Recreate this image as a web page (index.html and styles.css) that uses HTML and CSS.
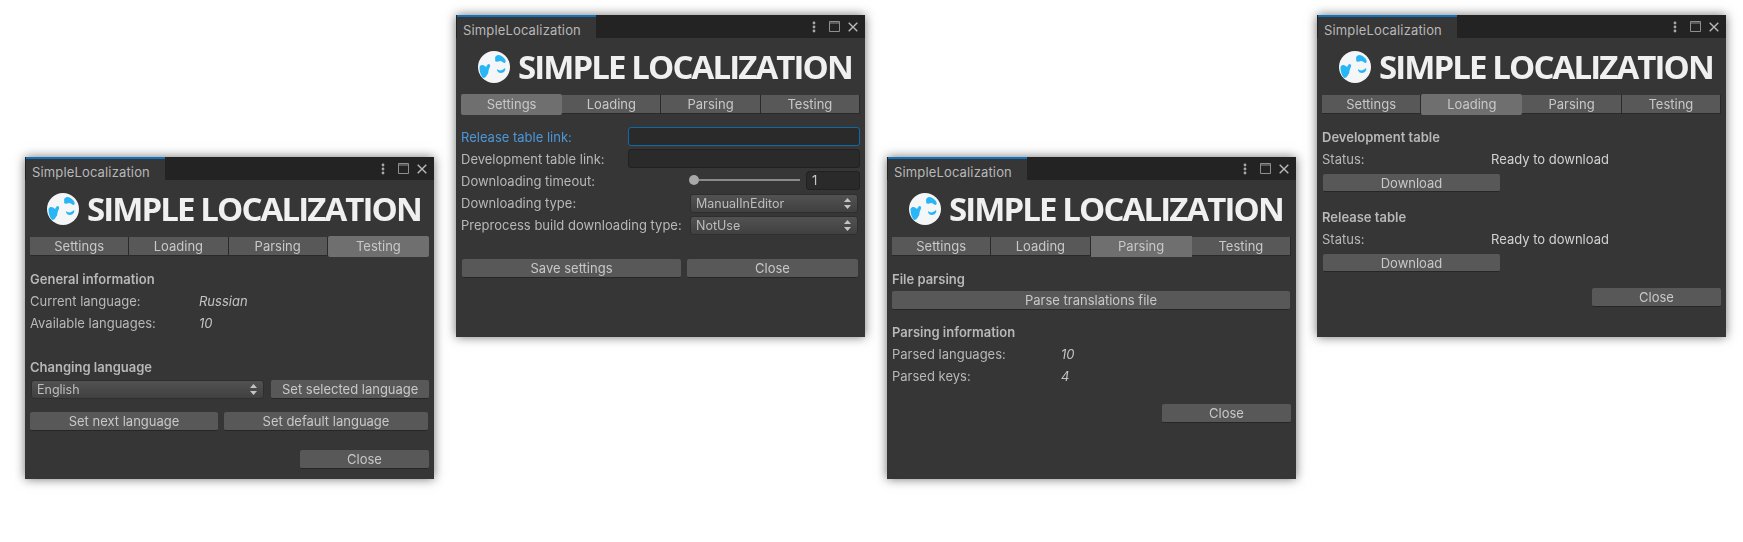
FILE: index.html
```html
<!DOCTYPE html>
<html>
<head>
    <title>SimpleLocalization</title>
    <link rel="stylesheet" href="styles.css">
</head>
<body>
    <svg width="0" height="0" class="defs">
        <symbol id="globe" viewBox="0 0 32 32">
            <circle cx="16" cy="16" r="16" fill="#f4f6f7"/>
            <path fill="#29b6f6" d="M18 5 C20 3 23 4 26 7 C28 9 28 11 27 12 C25 12 24 10 22 10 C20 11 18 11 17 10 C18 8 16 7 18 5 Z"/>
            <path fill="#29b6f6" d="M1.5 16 C3 13 6 14 8 16 C9 15 9 13 11 13 C13 14 12 16 11 18 C10 20 11 22 9 24 C8 26 7 27 5 27 C2 23 1.5 20 1.5 16 Z"/>
            <path fill="#29b6f6" d="M19 18 C21 20 24 20 27 17 C28 19 26 22 23 22 C21 22 19 21 19 18 Z"/>
        </symbol>
        <symbol id="updown" viewBox="0 0 7 11">
            <path fill="#c4c4c4" d="M3.5 0 L7 4 H0 Z M0 7 H7 L3.5 11 Z"/>
        </symbol>
    </svg>

    <!-- Testing tab -->
    <div class="window win-testing">
        <div class="titlebar">
            <div class="tab-title">SimpleLocalization</div>
            <div class="win-icons">
                <svg class="dots" width="4" height="12" viewBox="0 0 4 12"><circle cx="2" cy="2" r="1.4"/><circle cx="2" cy="6" r="1.4"/><circle cx="2" cy="10" r="1.4"/></svg>
                <svg width="11" height="11" viewBox="0 0 11 11"><path d="M.5 .5 H10.5 V10.5 H.5 Z M.5 2 H10.5" class="outline"/></svg>
                <svg width="10" height="10" viewBox="0 0 10 10"><path d="M.7 .7 L9.3 9.3 M9.3 .7 L.7 9.3" class="outline strong"/></svg>
            </div>
        </div>
        <div class="logo">
            <svg class="globe"><use href="#globe"/></svg>
            <span class="logo-text">SIMPLE LOCALIZATION</span>
        </div>
        <div class="tabs">
            <button class="tab">Settings</button>
            <button class="tab">Loading</button>
            <button class="tab">Parsing</button>
            <button class="tab active rounded">Testing</button>
        </div>
        <div class="pane">
            <div class="row heading">General information</div>
            <div class="row"><span class="key">Current language:</span><em>Russian</em></div>
            <div class="row"><span class="key">Available languages:</span><em>10</em></div>
            <div class="row heading mt-changing">Changing language</div>
            <div class="btn-row mt-select">
                <div class="dropdown lang-select">English <svg class="arrows"><use href="#updown"/></svg></div>
                <button class="btn set-selected">Set selected language</button>
            </div>
            <div class="btn-row mt-next">
                <button class="btn set-next">Set next language</button>
                <button class="btn set-default">Set default language</button>
            </div>
            <div class="close-row mt-close-testing"><button class="btn close">Close</button></div>
        </div>
    </div>

    <!-- Settings tab -->
    <div class="window win-settings">
        <div class="titlebar">
            <div class="tab-title">SimpleLocalization</div>
            <div class="win-icons">
                <svg class="dots" width="4" height="12" viewBox="0 0 4 12"><circle cx="2" cy="2" r="1.4"/><circle cx="2" cy="6" r="1.4"/><circle cx="2" cy="10" r="1.4"/></svg>
                <svg width="11" height="11" viewBox="0 0 11 11"><path d="M.5 .5 H10.5 V10.5 H.5 Z M.5 2 H10.5" class="outline"/></svg>
                <svg width="10" height="10" viewBox="0 0 10 10"><path d="M.7 .7 L9.3 9.3 M9.3 .7 L.7 9.3" class="outline strong"/></svg>
            </div>
        </div>
        <div class="logo">
            <svg class="globe"><use href="#globe"/></svg>
            <span class="logo-text">SIMPLE LOCALIZATION</span>
        </div>
        <div class="tabs">
            <button class="tab active rounded">Settings</button>
            <button class="tab">Loading</button>
            <button class="tab">Parsing</button>
            <button class="tab">Testing</button>
        </div>
        <div class="pane">
            <div class="row focused">Release table link:<input class="field link-field focus" type="text"></div>
            <div class="row">Development table link:<input class="field link-field" type="text"></div>
            <div class="row">Downloading timeout:
                <div class="slider"><span class="knob"></span><span class="track"></span></div>
                <input class="field number-field" type="text" value="1">
            </div>
            <div class="row">Downloading type:<div class="dropdown type-select">ManualInEditor <svg class="arrows"><use href="#updown"/></svg></div></div>
            <div class="row">Preprocess build downloading type:<div class="dropdown type-select">NotUse <svg class="arrows"><use href="#updown"/></svg></div></div>
            <div class="btn-row mt-save">
                <button class="btn save">Save settings</button>
                <button class="btn close-settings">Close</button>
            </div>
        </div>
    </div>

    <!-- Parsing tab -->
    <div class="window win-parsing">
        <div class="titlebar">
            <div class="tab-title">SimpleLocalization</div>
            <div class="win-icons">
                <svg class="dots" width="4" height="12" viewBox="0 0 4 12"><circle cx="2" cy="2" r="1.4"/><circle cx="2" cy="6" r="1.4"/><circle cx="2" cy="10" r="1.4"/></svg>
                <svg width="11" height="11" viewBox="0 0 11 11"><path d="M.5 .5 H10.5 V10.5 H.5 Z M.5 2 H10.5" class="outline"/></svg>
                <svg width="10" height="10" viewBox="0 0 10 10"><path d="M.7 .7 L9.3 9.3 M9.3 .7 L.7 9.3" class="outline strong"/></svg>
            </div>
        </div>
        <div class="logo">
            <svg class="globe"><use href="#globe"/></svg>
            <span class="logo-text">SIMPLE LOCALIZATION</span>
        </div>
        <div class="tabs">
            <button class="tab">Settings</button>
            <button class="tab">Loading</button>
            <button class="tab active">Parsing</button>
            <button class="tab">Testing</button>
        </div>
        <div class="pane">
            <div class="row heading">File parsing</div>
            <button class="btn parse">Parse translations file</button>
            <div class="row heading mt-parsing-info">Parsing information</div>
            <div class="row"><span class="key">Parsed languages:</span><em>10</em></div>
            <div class="row"><span class="key">Parsed keys:</span><em>4</em></div>
            <div class="close-row mt-close-parsing"><button class="btn close">Close</button></div>
        </div>
    </div>

    <!-- Loading tab -->
    <div class="window win-loading">
        <div class="titlebar">
            <div class="tab-title">SimpleLocalization</div>
            <div class="win-icons">
                <svg class="dots" width="4" height="12" viewBox="0 0 4 12"><circle cx="2" cy="2" r="1.4"/><circle cx="2" cy="6" r="1.4"/><circle cx="2" cy="10" r="1.4"/></svg>
                <svg width="11" height="11" viewBox="0 0 11 11"><path d="M.5 .5 H10.5 V10.5 H.5 Z M.5 2 H10.5" class="outline"/></svg>
                <svg width="10" height="10" viewBox="0 0 10 10"><path d="M.7 .7 L9.3 9.3 M9.3 .7 L.7 9.3" class="outline strong"/></svg>
            </div>
        </div>
        <div class="logo">
            <svg class="globe"><use href="#globe"/></svg>
            <span class="logo-text">SIMPLE LOCALIZATION</span>
        </div>
        <div class="tabs">
            <button class="tab">Settings</button>
            <button class="tab active rounded">Loading</button>
            <button class="tab">Parsing</button>
            <button class="tab">Testing</button>
        </div>
        <div class="pane">
            <div class="row heading">Development table</div>
            <div class="row"><span class="key">Status:</span><span class="value">Ready to download</span></div>
            <button class="btn download">Download</button>
            <div class="row heading mt-release">Release table</div>
            <div class="row"><span class="key">Status:</span><span class="value">Ready to download</span></div>
            <button class="btn download">Download</button>
            <div class="close-row mt-close-loading"><button class="btn close">Close</button></div>
        </div>
    </div>
</body>
</html>
```

FILE: styles.css
```css
body {
    margin: 0;
    width: 1743px;
    height: 542px;
    position: relative;
    overflow: hidden;
    background-color: #fff;
    font-family: Inter, "Noto Sans", sans-serif;
    font-size: 13px;
    color: #b8b8b8;
}

.defs {
    position: absolute;
}

/* windows sit freely on the canvas */
.window {
    position: absolute;
    width: 409px;
    height: 322px;
    background-color: #363636;
    box-shadow: 0 0 10px rgba(0, 0, 0, 0.55);
    filter: blur(0.35px);
}

.win-testing { left: 25px; top: 157px; }
.win-settings { left: 456px; top: 15px; }
.win-parsing { left: 887px; top: 157px; }
.win-loading { left: 1317px; top: 15px; }

.titlebar {
    display: flex;
    justify-content: space-between;
    height: 23px;
    background-color: #232323;
}

.tab-title {
    width: 139px;
    margin-left: 1px;
    padding: 6px 0 0 6px;
    box-sizing: border-box;
    border-top: 2px solid #0f74bd;
    background-color: #363636;
    font-size: 13px;
    letter-spacing: 0.15px;
    line-height: 15px;
    color: #b8b8b8;
}

.win-icons {
    display: flex;
    align-items: center;
    gap: 8px;
    padding-right: 7px;
}

.win-icons svg {
    fill: #a8a8a8;
}

.win-icons .dots {
    margin-right: 5px;
}

.outline {
    fill: none;
    stroke: #8f8f8f;
}

.outline.strong {
    stroke: #b8b8b8;
    stroke-width: 1.4;
}

.logo {
    display: flex;
    align-items: center;
    height: 57px;
    padding-left: 22px;
    box-sizing: border-box;
}

.globe {
    width: 32px;
    height: 32px;
    flex: none;
}

.logo-text {
    margin-left: 8px;
    font-family: "Open Sans", sans-serif;
    font-weight: 700;
    font-size: 33px;
    letter-spacing: -1.9px;
    white-space: nowrap;
    color: #f0f0f0;
}

.tabs {
    display: flex;
    height: 19px;
    margin: 0 5px;
}

.tab {
    flex: 1 1 0;
    padding: 0;
    border: none;
    border-right: 1px solid #2a2a2a;
    border-bottom: 1px solid #2a2a2a;
    background-color: #585858;
    font: inherit;
    color: #c8c8c8;
}

.tab.active {
    flex-grow: 1.03;
    height: 21px;
    margin-top: -1px;
    padding-bottom: 1px;
    border: none;
    background-color: #6f6f6f;
}

.tab.rounded {
    border-radius: 2px;
}

.pane {
    margin-top: 12px;
    padding: 0 5px;
}

.row {
    display: flex;
    align-items: center;
    height: 22px;
    white-space: nowrap;
}

.heading {
    font-weight: 600;
}

.key {
    width: 169px;
    flex: none;
}

em {
    color: #c4c4c4;
}

.value {
    color: #d2d2d2;
}

.focused {
    color: #4c97d8;
}

.btn {
    display: block;
    height: 19px;
    padding: 0;
    border: none;
    border-bottom: 1px solid #262626;
    border-radius: 2px;
    background-color: #585858;
    font: inherit;
    color: #c8c8c8;
}

.btn-row {
    display: flex;
    align-items: center;
}

.close-row {
    display: flex;
    justify-content: flex-end;
}

.close { width: 129px; }
.parse { width: 398px; margin-top: 1px; }
.download { width: 177px; height: 18px; margin: 4px 0 0 1px; }
.set-selected { width: 158px; margin-left: 7px; }
.set-next { width: 188px; }
.set-default { width: 204px; margin-left: 6px; }
.save { width: 219px; margin-left: 1px; }
.close-settings { width: 171px; margin-left: 6px; }

.mt-changing { margin-top: 22px; }
.mt-select { margin-top: 2px; }
.mt-next { margin-top: 13px; }
.mt-close-testing { margin-top: 19px; }
.mt-parsing-info { margin-top: 11px; }
.mt-close-parsing { margin-top: 17px; }
.mt-release { margin-top: 14px; }
.mt-close-loading { margin-top: 16px; }
.mt-save { margin-top: 23px; }

.field {
    box-sizing: border-box;
    height: 19px;
    margin-top: -2px;
    padding: 0 5px;
    border: 1px solid #212121;
    border-radius: 3px;
    outline: none;
    background-color: #2a2a2a;
    font: inherit;
    color: #c8c8c8;
}

.link-field {
    width: 232px;
    margin-left: auto;
}

.link-field.focus {
    border-color: #0f6aa8;
}

.number-field {
    width: 54px;
    margin-left: 6px;
}

.slider {
    display: flex;
    align-items: center;
    width: 111px;
    margin-left: auto;
    margin-top: -2px;
}

.knob {
    width: 10px;
    height: 10px;
    flex: none;
    border-radius: 50%;
    background-color: #a8a8a8;
}

.track {
    flex: 1;
    height: 2px;
    background-color: #8a8a8a;
}

.dropdown {
    display: flex;
    align-items: center;
    justify-content: space-between;
    box-sizing: border-box;
    height: 19px;
    padding: 0 6px 0 5px;
    border: 1px solid #2e2e2e;
    border-radius: 3px;
    background: linear-gradient(#525252, #404040);
    font-size: 12.5px;
    color: #bdbdbd;
}

.lang-select {
    width: 234px;
    margin-left: 1px;
}

.type-select {
    width: 168px;
    margin-left: auto;
    margin-right: 2px;
}

.arrows {
    width: 7px;
    height: 11px;
}
```
